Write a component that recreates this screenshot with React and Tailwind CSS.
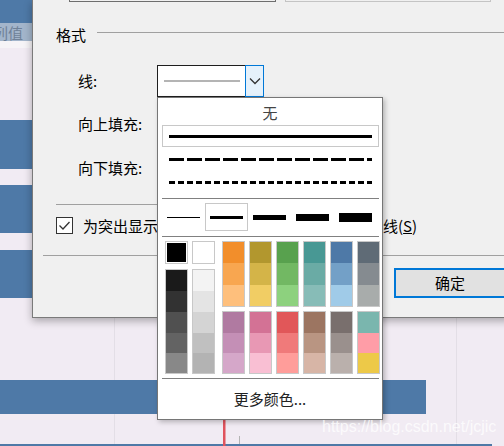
import React from "react";

// swatch data: class strings written in full so Tailwind picks them up
const grayCols = [
  ["bg-[#1a1a1a]", "bg-[#323232]", "bg-[#505050]", "bg-[#636363]", "bg-[#888888]"],
  ["bg-[#f3f3f3]", "bg-[#e4e4e4]", "bg-[#d4d4d4]", "bg-[#c0c0c0]", "bg-[#b3b3b3]"],
];
const grayHeights = ["h-[21px]", "h-[21px]", "h-[21px]", "h-[20px]", "h-[20px]"];

const topCols = [
  ["bg-[#f28e2b]", "bg-[#f8a650]", "bg-[#febf7c]"],
  ["bg-[#b2972e]", "bg-[#d4b448]", "bg-[#f1cd64]"],
  ["bg-[#58a14e]", "bg-[#72b863]", "bg-[#8dd17e]"],
  ["bg-[#489894]", "bg-[#6aaba5]", "bg-[#87bcb7]"],
  ["bg-[#4e79a7]", "bg-[#73a0c7]", "bg-[#a0cbe8]"],
  ["bg-[#5f6b76]", "bg-[#858b90]", "bg-[#a8acab]"],
];
const topHeights = ["h-[21px]", "h-[22px]", "h-[21px]"];

const bottomCols = [
  ["bg-[#b07aa1]", "bg-[#c48fb6]", "bg-[#d5a7c9]"],
  ["bg-[#d37295]", "bg-[#e898b4]", "bg-[#f9bfd3]"],
  ["bg-[#e15759]", "bg-[#f07a7a]", "bg-[#ff9d9a]"],
  ["bg-[#9c7561]", "bg-[#b99582]", "bg-[#d7b5a6]"],
  ["bg-[#796f6d]", "bg-[#9a908d]", "bg-[#bab0ac]"],
  ["bg-[#7ab6ae]", "bg-[#ff9da7]", "bg-[#edc948]"],
];
const bottomHeights = ["h-[21px]", "h-[20px]", "h-[20px]"];

const widths = [
  { h: "h-px", selected: false },
  { h: "h-[3px]", selected: true },
  { h: "h-[5px]", selected: false },
  { h: "h-[7px]", selected: false },
  { h: "h-[9px]", selected: false },
];

function Swatch({ cells, heights }) {
  return (
    <div className="w-[23px] border border-[#c8c8c8] flex flex-col">
      {cells.map((c, i) => (
        <div key={i} className={`${c} ${heights[i]}`} />
      ))}
    </div>
  );
}

function ChartBackground() {
  return (
    <svg className="absolute inset-0" width="504" height="446">
      <line x1="114.5" y1="0" x2="114.5" y2="446" stroke="#e3dee6" />
      <line x1="456.5" y1="0" x2="456.5" y2="446" stroke="#e3dee6" />
      <rect x="0" y="0" width="40" height="23" fill="#4e79a7" />
      <rect x="0" y="23" width="40" height="18" fill="#a3b5cb" />
      <rect x="0" y="41" width="40" height="7" fill="#f6f4f7" />
      <text
        x="-7"
        y="39"
        fontSize="15"
        fill="#6f8198"
        fontFamily="'Noto Sans CJK SC', sans-serif"
      >
        列值
      </text>
      <rect x="0" y="120" width="40" height="49" fill="#4e79a7" />
      <rect x="0" y="185" width="40" height="48" fill="#4e79a7" />
      <rect x="0" y="250" width="40" height="48" fill="#4e79a7" />
      <rect x="0" y="380" width="426" height="34" fill="#4e79a7" />
      <rect x="0" y="444" width="492" height="2" fill="#4e79a7" />
      <rect x="223" y="420" width="2.5" height="26" fill="#e0535d" />
      <rect x="239" y="436" width="1" height="8" fill="#b4b4b4" />
    </svg>
  );
}

function LinePopup() {
  return (
    <div className="absolute left-[124px] top-[97px] w-[226px] h-[323px] bg-white border border-[#767676] shadow-[2px_2px_5px_rgba(0,0,0,0.25)] flex flex-col">
      <div className="h-[27px] pt-[5px] text-center leading-[20px] text-[#444]">无</div>

      {/* line styles */}
      <div className="ml-[4px] w-[217px] h-[22px] border border-[#c8c8c8] flex items-center">
        <div className="ml-[6px] w-[203px] h-[3px] bg-black" />
      </div>
      <svg className="ml-[11px] mt-[11px]" width="203" height="3">
        <line x1="0" y1="1.5" x2="203" y2="1.5" stroke="#000" strokeWidth="3" strokeDasharray="15 3" />
      </svg>
      <svg className="ml-[11px] mt-[20px]" width="203" height="3">
        <line x1="0" y1="1.5" x2="203" y2="1.5" stroke="#000" strokeWidth="3" strokeDasharray="6 3" />
      </svg>
      <div className="ml-[4px] mt-[14px] w-[217px] h-px bg-[#808080]" />

      {/* line widths */}
      <div className="ml-[4px] mt-[4px] flex h-[28px]">
        {widths.map((w, i) => (
          <div
            key={i}
            className={`w-[43px] h-[28px] flex items-center justify-center ${
              w.selected ? "border border-[#c8c8c8]" : ""
            }`}
          >
            <div className={`w-[33px] bg-black ${w.h}`} />
          </div>
        ))}
      </div>
      <div className="ml-[4px] mt-[5px] w-[217px] h-px bg-[#808080]" />

      {/* colours */}
      <div className="ml-[7px] mt-[4px] flex">
        {grayCols.map((col, i) => (
          <div key={i} className={`flex flex-col gap-[5px] ${i === 1 ? "ml-[4px]" : ""}`}>
            <div className="w-[23px] h-[23px] border border-[#c8c8c8] p-px">
              <div className={`w-full h-full ${i === 0 ? "bg-black" : "bg-white"}`} />
            </div>
            <Swatch cells={col} heights={grayHeights} />
          </div>
        ))}
        <div className="ml-[7px] flex flex-col gap-[4px]">
          <div className="flex gap-[4px]">
            {topCols.map((col, i) => (
              <Swatch key={i} cells={col} heights={topHeights} />
            ))}
          </div>
          <div className="flex gap-[4px]">
            {bottomCols.map((col, i) => (
              <Swatch key={i} cells={col} heights={bottomHeights} />
            ))}
          </div>
        </div>
      </div>
      <div className="ml-[4px] mt-[4px] w-[217px] h-px bg-[#808080]" />
      <div className="flex-1 flex items-center justify-center leading-[20px] text-[#222]">
        更多颜色...
      </div>
    </div>
  );
}

export default function App() {
  return (
    <div className="relative w-[504px] h-[446px] overflow-hidden bg-[#f1ebf3] font-['Noto_Sans_CJK_SC',sans-serif] text-[15px]">
      <ChartBackground />

      {/* format dialog */}
      <div className="absolute left-[32px] top-0 w-[480px] h-[318px] bg-[#f0f0f0] border-l border-b border-[#7a7a7a] shadow-[0_3px_8px_rgba(0,0,0,0.3)] text-black">
        <div className="flex h-[2px]">
          <div className="ml-[36px] w-[207px] h-[2px] border-x border-b border-[#6e6e6e]" />
          <div className="ml-[9px] w-[206px] h-[2px] border-x border-b border-[#c4c4c4]" />
        </div>

        <div className="mt-[23px] flex items-start ml-[23px]">
          <span className="leading-[20px]">格式</span>
          <div className="flex-1 ml-[11px] mt-[7px] h-px bg-[#a0a0a0]" />
        </div>

        <div className="mt-[20px] flex items-center h-[32px]">
          <span className="ml-[45px] w-[79px] leading-[20px]">线:</span>
          <div className="flex h-[32px] w-[107px]">
            <div className="flex-1 bg-white border border-r-0 border-[#1e1e1e] flex items-center pl-[6px]">
              <div className="w-[76px] h-[2px] bg-[#b4b4b4]" />
            </div>
            <div className="w-[19px] bg-[#e5f1fb] border border-[#0078d7] flex items-center justify-center">
              <svg width="12" height="8" viewBox="0 0 12 8">
                <path d="M1 1.5 L6 6.5 L11 1.5" fill="none" stroke="#333" strokeWidth="1.3" />
              </svg>
            </div>
          </div>
        </div>

        <div className="mt-[11px] flex items-center h-[32px]">
          <span className="ml-[45px] leading-[20px]">向上填充:</span>
        </div>
        <div className="mt-[12px] flex items-center h-[32px]">
          <span className="ml-[45px] leading-[20px]">向下填充:</span>
        </div>

        <div className="mt-[20px] ml-[23px] w-[320px] h-px bg-[#a0a0a0]" />

        <div className="mt-[12px] ml-[23px] flex items-center h-[17px]">
          <div className="w-[17px] h-[17px] border border-[#333] bg-white flex items-center justify-center">
            <svg width="15" height="15" viewBox="0 0 15 15">
              <path d="M2.5 7.5 L6 11 L12.5 4" fill="none" stroke="#333" strokeWidth="1.3" />
            </svg>
          </div>
          <span className="ml-[10px] leading-[20px] whitespace-nowrap">
            为突出显示的标记添加一条自定义格式的参考线(<span className="underline">S</span>)
          </span>
        </div>

        <div className="mt-[21px] ml-[10px] h-px bg-[#a0a0a0]" />

        <div className="mt-[12px] ml-[361px] w-[112px] h-[30px] border-2 border-[#0078d7] bg-[#e1e1e1] flex items-center justify-center leading-[20px]">
          确定
        </div>

        <LinePopup />
      </div>

      <div className="absolute left-[322px] top-[418px] font-['Liberation_Sans',sans-serif] text-[16px] leading-[18px] text-white/75">
        https://blog.csdn.net/jcjic
      </div>
    </div>
  );
}
